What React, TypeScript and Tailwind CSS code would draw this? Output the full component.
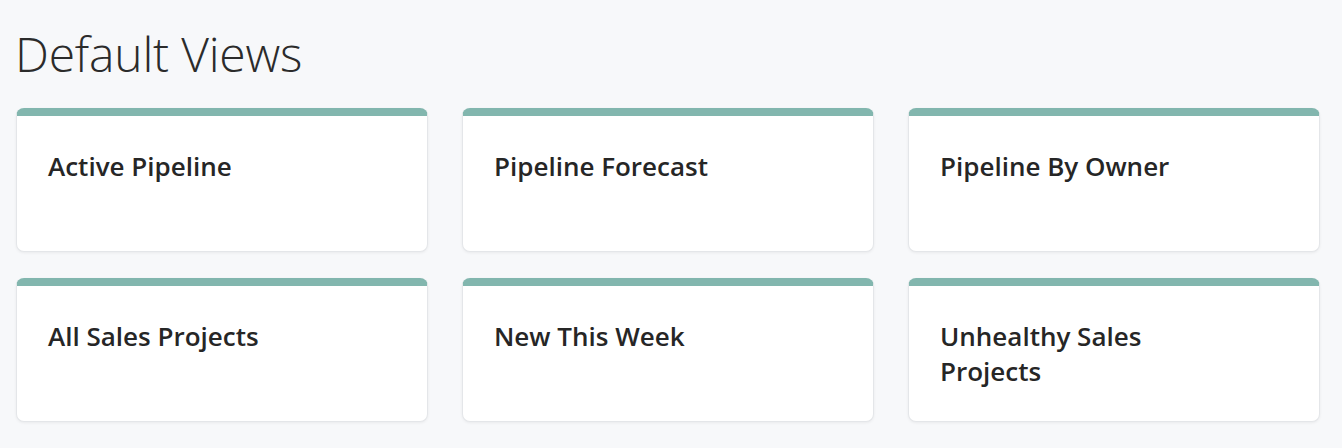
const views = [
  "Active Pipeline",
  "Pipeline Forecast",
  "Pipeline By Owner",
  "All Sales Projects",
  "New This Week",
  "Unhealthy Sales Projects",
];

export default function App() {
  return (
    <div className="min-h-screen bg-[#f7f8fa] px-4 pt-[22px] pb-6 pr-[22px] font-['Open_Sans',sans-serif]">
      <h1 className="-ml-[1px] text-[48px] font-light leading-[64px] text-[#2b2b2b] tracking-[-0.2px]">Default Views</h1>
      <div className="mt-[22px] grid grid-cols-3 gap-x-[34px] gap-y-[26px]">
        {views.map((title) => (
          <div
            key={title}
            className="h-[144px] rounded-lg border border-[#e4e6e9] border-t-8 border-t-[#82b6ae] bg-white pl-[31px] pr-8 pt-[33px] shadow-[0_1px_3px_rgba(0,0,0,0.06)]"
          >
            <div className="max-w-[260px] text-[26px] font-semibold leading-[35px] text-[#262626]">{title}</div>
          </div>
        ))}
      </div>
    </div>
  );
}
